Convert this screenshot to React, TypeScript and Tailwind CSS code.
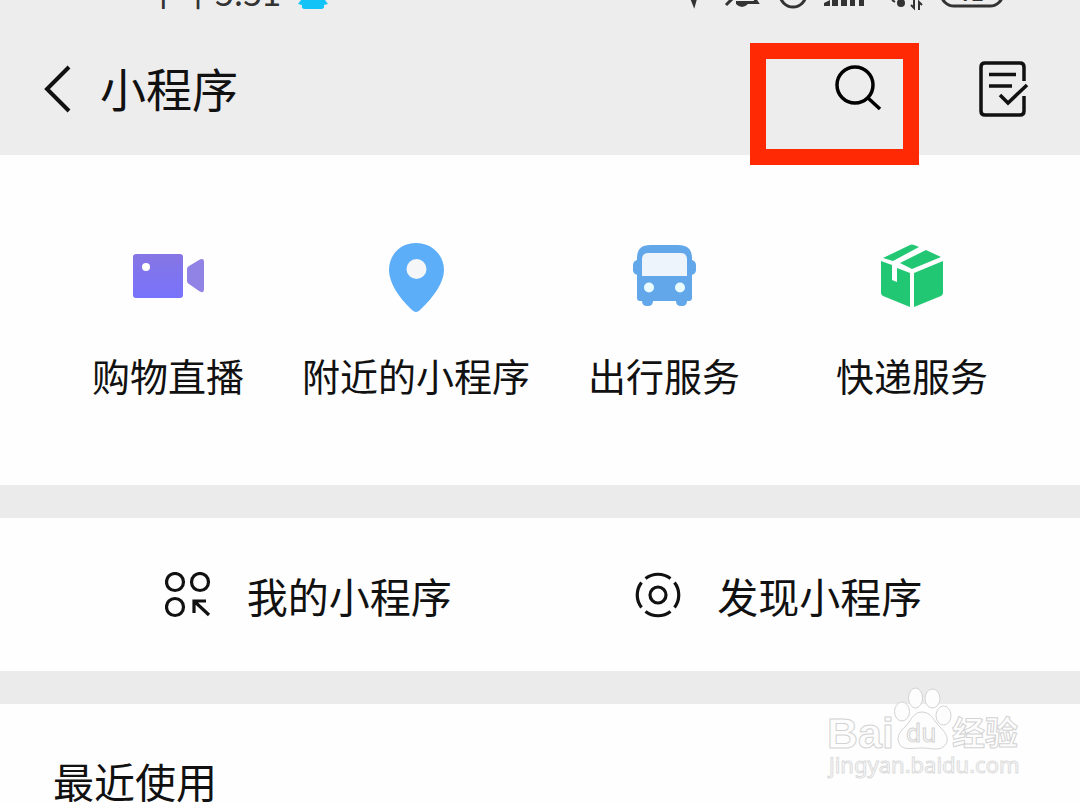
import type { ReactNode } from 'react'

interface Service {
  label: string
  icon: ReactNode
}

function StatusIcons() {
  return (
    <svg viewBox="680 0 330 12" className="h-3 w-[330px]" fill="none" stroke="#333" aria-hidden="true">
      <path d="M690 -6L694 4L698 -10" strokeWidth="3" />
      <path d="M726 5L735 -4M736 2.500H757L752 -5" strokeWidth="3" />
      <path d="M736 4H748Q742 10 736 4Z" fill="#333" stroke="none" />
      <circle cx="793" cy="-6" r="13" strokeWidth="3" />
      <path
        d="M824 6V3L830 0V6ZM832 0H838V6H832ZM841 0H847V6H841ZM850 0H855V6H850ZM859 0H864V6H859Z"
        fill="#333"
        stroke="none"
      />
      <circle cx="901" cy="3" r="4" fill="#333" stroke="none" />
      <path d="M892 0L895 2M914 -2V8L911 5M919 10V2L922 5" strokeWidth="2" />
      <rect x="941" y="-26" width="62" height="32" rx="13" strokeWidth="3" />
      <text x="960" y="1" fontSize="20" fontWeight="700" fill="#333" stroke="none">
        72
      </text>
    </svg>
  )
}

function BackIcon() {
  return (
    <svg viewBox="0 0 28 48" className="h-12 w-7" fill="none" stroke="#111" strokeWidth="4">
      <path d="M25 2L3 24L25 46" />
    </svg>
  )
}

function SearchIcon() {
  return (
    <svg viewBox="0 0 48 48" className="size-12" fill="none" stroke="#000" strokeWidth="3.500">
      <circle cx="20" cy="20" r="18" />
      <path d="M33 33L45 44" />
    </svg>
  )
}

function DocumentIcon() {
  return (
    <svg viewBox="0 0 50 58" className="h-[58px] w-[50px]" fill="none" stroke="#111" strokeWidth="3.500">
      <path d="M45 21V7Q45 3 41 3H6Q2 3 2 7V51Q2 55 6 55H41Q45 55 45 51V36" />
      <path d="M10 14.500H37M10 26H33" />
      <path d="M21 35L29 43L48 25" />
    </svg>
  )
}

function VideoIcon() {
  return (
    <svg viewBox="0 0 72 72" className="size-[72px]">
      <defs>
        <linearGradient id="video" x1="0" y1="0" x2="0" y2="1">
          <stop offset="0" stopColor="#8676e4" />
          <stop offset="1" stopColor="#7873fc" />
        </linearGradient>
      </defs>
      <rect x="1" y="14" width="50" height="44" rx="3" fill="url(#video)" />
      <circle cx="14" cy="27" r="4" fill="#fff" />
      <path d="M55 29Q55 27 57 26L67 20Q72 17 72 22V49Q72 54 67 51L57 44Q55 43 55 41Z" fill="#9182e6" />
    </svg>
  )
}

function PinIcon() {
  return (
    <svg viewBox="0 0 72 72" className="size-[72px]">
      <path
        d="M36 3C20 3 9 15 9 30C9 42 18 57 32 70Q36 74 40 70C54 57 64 42 64 30C64 15 52 3 36 3Z"
        fill="#5caef9"
      />
      <circle cx="36.500" cy="29" r="10" fill="#f4f6f8" />
    </svg>
  )
}

function BusIcon() {
  return (
    <svg viewBox="0 0 72 72" className="size-[72px]">
      <g fill="#62a7ea">
        <rect x="5" y="20" width="63" height="15" rx="5" />
        <path d="M9 18Q9 5 22 5H50Q64 5 64 18V58Q64 61 61 61H12Q9 61 9 58Z" />
        <path d="M14 58H25V61Q25 66 20 66H19Q14 66 14 61ZM48 58H59V61Q59 66 54 66H53Q48 66 48 61Z" />
      </g>
      <path d="M14 20Q14 13 20 13H53Q59 13 59 20V36H14Z" fill="#edf4fc" />
      <circle cx="21" cy="47.500" r="5" fill="#e9fcff" />
      <circle cx="52" cy="47.500" r="5" fill="#e9fcff" />
    </svg>
  )
}

function ParcelIcon() {
  return (
    <svg viewBox="0 0 72 72" className="size-[72px]" fill="#22c774">
      <path d="M7 18L34 5Q36 4 38 5L43 7L17 21Z" />
      <path d="M24 23L50 10L65 17L36 29Z" />
      <path d="M5 21L16 25V40L21 42V28L34 33V67L7 56Q5 55 5 53Z" />
      <path d="M38 33L67 21V53Q67 55 65 56L38 67Z" />
    </svg>
  )
}

function MineIcon() {
  return (
    <svg viewBox="0 0 46 46" className="size-[46px]" fill="none" stroke="#111" strokeWidth="3.200">
      <circle cx="10" cy="10" r="8.500" />
      <circle cx="35" cy="10" r="8.500" />
      <circle cx="10" cy="35" r="8.500" />
      <path d="M29 41V29H41M29 29L44 43" />
    </svg>
  )
}

function DiscoverIcon() {
  return (
    <svg viewBox="0 0 46 46" className="size-[46px]" fill="none" stroke="#111" strokeWidth="3.200">
      <circle cx="23" cy="23" r="8" />
      <path d="M10.500 6.500A20.500 20.500 0 0 1 35.500 6.500M39.500 10.500A20.500 20.500 0 0 1 39.500 35.500M35.500 39.500A20.500 20.500 0 0 1 10.500 39.500M6.500 35.500A20.500 20.500 0 0 1 6.500 10.500" />
    </svg>
  )
}

function Watermark() {
  return (
    <svg
      viewBox="0 0 200 100"
      className="pointer-events-none absolute right-[55px] bottom-[18px] h-[100px] w-[200px]"
      fill="#fdfdfd"
      stroke="#d3d3d3"
      strokeWidth="1"
    >
      <text x="2" y="63" fontSize="43" className="font-['Liberation_Sans'] font-bold">
        Bai
      </text>
      <ellipse cx="77" cy="26.500" rx="7.500" ry="9.500" />
      <ellipse cx="90.500" cy="13" rx="7" ry="10" />
      <ellipse cx="107.500" cy="13.500" rx="7.500" ry="9.500" />
      <ellipse cx="118.500" cy="30.500" rx="7.500" ry="9.500" />
      <path d="M97 27C88 27 86 36 80 42C73 48 72 53 74 58C77 66 87 63 97 63C107 63 116 67 121 59C124 53 121 48 115 42C109 36 106 27 97 27Z" />
      <text x="81" y="57" fontSize="24" className="font-['DejaVu_Sans']">
        du
      </text>
      <text x="127" y="60" fontSize="33" className="font-['Noto_Sans_CJK_SC',sans-serif] font-bold">
        经验
      </text>
      <text x="4" y="88" fontSize="22" className="font-['Noto_Sans',sans-serif]" stroke="#dcdcdc">
        jingyan.baidu.com
      </text>
    </svg>
  )
}

const services: Service[] = [
  { label: '购物直播', icon: <VideoIcon /> },
  { label: '附近的小程序', icon: <PinIcon /> },
  { label: '出行服务', icon: <BusIcon /> },
  { label: '快递服务', icon: <ParcelIcon /> },
]

const shortcuts: Service[] = [
  { label: '我的小程序', icon: <MineIcon /> },
  { label: '发现小程序', icon: <DiscoverIcon /> },
]

export default function App() {
  return (
    <div className="relative flex min-h-screen flex-col bg-[#ebebeb] font-['Noto_Sans_CJK_SC',sans-serif] text-[#111]">
      <header className="bg-[#ededed]">
        <div className="flex h-3 items-end justify-between overflow-hidden pr-[70px] pl-[147px]">
          <div className="flex items-end gap-4">
            <span className="text-[34px] leading-10 text-[#333]">下午5:51</span>
            <svg viewBox="0 0 32 12" className="h-3 w-8" fill="#12c3f8" aria-hidden="true">
              <path d="M4 0H28L31 4L27 5Q28 9 24 9H8Q4 9 5 5L1 4Z" />
            </svg>
          </div>
          <StatusIcons />
        </div>

        <nav className="flex items-center pt-[43px] pr-[51px] pb-8 pl-11">
          <button type="button" aria-label="返回">
            <BackIcon />
          </button>
          <h1 className="ml-7 pb-1 text-[46px] leading-16">小程序</h1>
          <div className="relative ml-auto flex">
            <button type="button" aria-label="搜索">
              <SearchIcon />
            </button>
            <div className="pointer-events-none absolute -top-[22px] -right-9 h-[122px] w-[169px] border-16 border-[#ff2a04]" />
          </div>
          <button type="button" aria-label="记录" className="ml-24">
            <DocumentIcon />
          </button>
        </nav>
      </header>

      <main className="flex flex-1 flex-col gap-[33px]">
        <section className="grid grid-cols-4 bg-[#fefefe] px-11 pt-[85px] pb-[82px]">
          {services.map((service) => (
            <button
              key={service.label}
              type="button"
              className="flex flex-col items-center gap-[35px] text-[38px] leading-14 whitespace-nowrap"
            >
              {service.icon}
              {service.label}
            </button>
          ))}
        </section>

        <section className="grid grid-cols-2 bg-[#fefefe] pt-[49px] pr-[66px] pb-12 pl-[73px]">
          {shortcuts.map((shortcut) => (
            <button
              key={shortcut.label}
              type="button"
              className="flex items-center justify-center gap-9 text-[41px] leading-14 whitespace-nowrap"
            >
              {shortcut.icon}
              {shortcut.label}
            </button>
          ))}
        </section>

        <section className="flex-1 bg-[#fefefe] pt-14 pl-[53px]">
          <h2 className="text-[41px] leading-10">最近使用</h2>
        </section>
      </main>
      <Watermark />
    </div>
  )
}
